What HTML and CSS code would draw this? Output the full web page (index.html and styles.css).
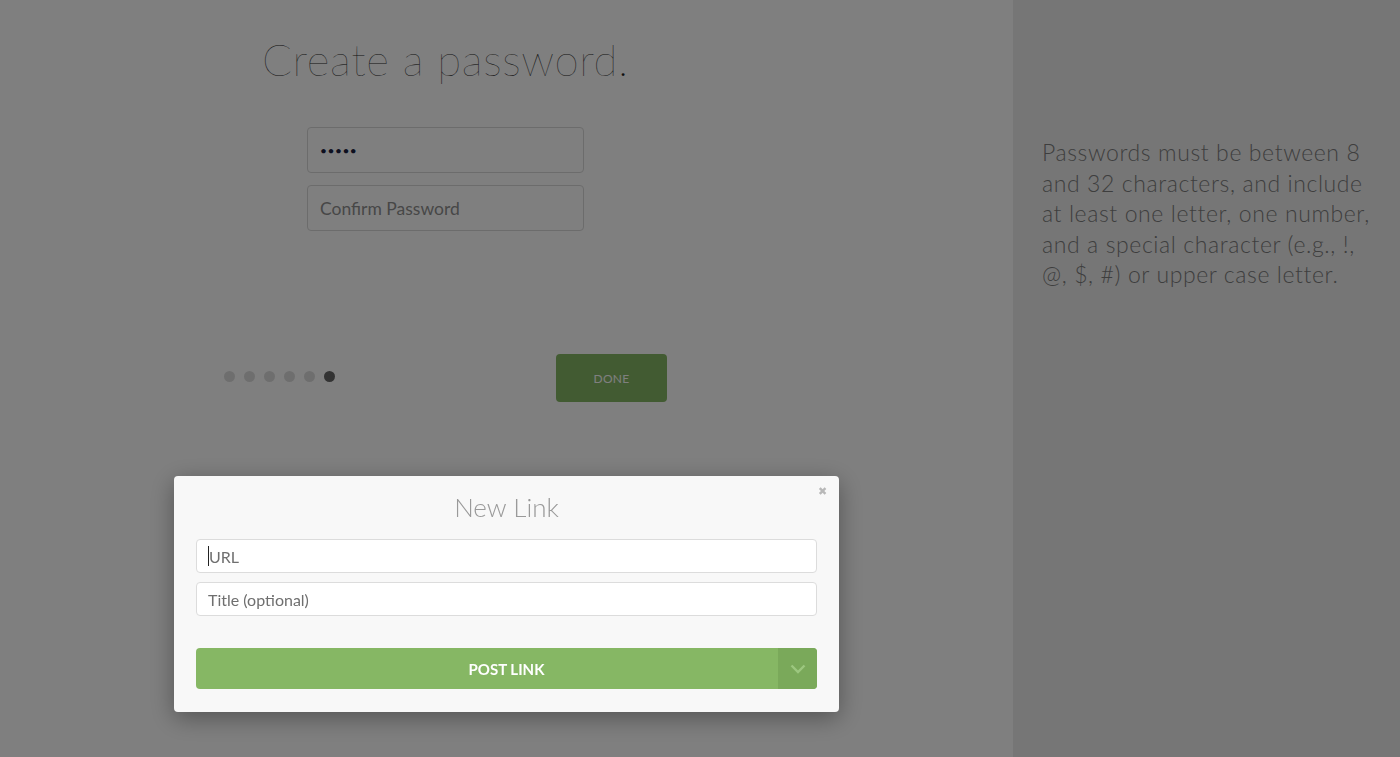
FILE: index.html
```html
<!DOCTYPE html>
<html lang="en">
<head>
<meta charset="utf-8">
<title>Create a password</title>
<link rel="stylesheet" href="styles.css">
</head>
<body>
<div class="page">
  <main class="main">
    <h1 class="heading">Create a password.</h1>
    <div class="fields">
      <div class="field field-filled">•••••</div>
      <div class="field field-empty">Confirm Password</div>
    </div>
    <div class="footer">
      <div class="dots">
        <span class="dot"></span><span class="dot"></span><span class="dot"></span><span class="dot"></span><span class="dot"></span><span class="dot dot-active"></span>
      </div>
      <button class="done">DONE</button>
    </div>
  </main>
  <aside class="side">
    <p class="hint">Passwords must be between 8 and 32 characters, and include at least one letter, one number, and a special character (e.g., !, @, $, #) or upper case letter.</p>
  </aside>
</div>
<div class="overlay"></div>
<div class="modal">
  <span class="close">✖</span>
  <h2 class="modal-title">New Link</h2>
  <div class="modal-field"><span class="caret"></span>URL</div>
  <div class="modal-field">Title (optional)</div>
  <div class="post">
    <span class="post-label">POST LINK</span>
    <span class="post-toggle">
      <svg width="16" height="10" viewBox="0 0 16 10"><path d="M1.5 1.5 L8 8 L14.5 1.5" fill="none" stroke="#9cc77f" stroke-width="2.4"/></svg>
    </span>
  </div>
</div>
</body>
</html>
```
FILE: styles.css
```css
html, body {
  margin: 0;
  padding: 0;
  height: 100%;
}
body {
  font-family: "Lato", "Open Sans", sans-serif;
  background: #ffffff;
  overflow: hidden;
}
.page {
  display: flex;
  height: 757px;
}
.main {
  width: 1013px;
  display: flex;
  flex-direction: column;
  align-items: center;
  box-sizing: border-box;
  background: #ffffff;
  padding-right: 122px;
}
.heading {
  margin: 32px 0 0 0;
  font-weight: 200;
  font-size: 44px;
  line-height: 54px;
  color: #1e1e1e;
  letter-spacing: 0.6px;
}
.fields {
  margin-top: 41px;
  display: flex;
  flex-direction: column;
  gap: 12px;
}
.field {
  width: 277px;
  height: 46px;
  box-sizing: border-box;
  border: 1px solid #d8d8d8;
  border-radius: 4px;
  padding: 0 12px;
  display: flex;
  align-items: center;
  font-size: 17.5px;
  background: #ffffff;
}
.field-filled {
  color: #1b2140;
  font-size: 12px;
  letter-spacing: 0.5px;
}
.field-empty {
  color: #8f8f8f;
}
.footer {
  margin-top: 123px;
  display: flex;
  align-items: center;
  width: 443px;
  justify-content: space-between;
}
.dots {
  display: flex;
  gap: 9px;
  margin-bottom: 4px;
}
.dot {
  width: 11px;
  height: 11px;
  border-radius: 50%;
  background: #dddddd;
}
.dot-active {
  background: #666666;
}
.done {
  width: 111px;
  height: 48px;
  border: none;
  border-radius: 4px;
  background: #85b664;
  color: #ffffff;
  font-family: "Lato", "Open Sans", sans-serif;
  font-size: 12px;
  letter-spacing: 0.3px;
}
.side {
  flex: 1;
  background: #ededed;
  padding: 137px 0 0 29px;
}
.hint {
  margin: 0;
  width: 331px;
  font-size: 23px;
  font-weight: 300;
  line-height: 30.5px;
  letter-spacing: 0.6px;
  color: #7d7d7d;
}
.overlay {
  position: fixed;
  inset: 0;
  background: rgba(0, 0, 0, 0.5);
}
.modal {
  position: fixed;
  left: 174px;
  top: 476px;
  width: 665px;
  height: 236px;
  box-sizing: border-box;
  padding: 15px 22px 0 22px;
  background: #f8f8f8;
  border-radius: 4px;
  box-shadow: 0 6px 24px rgba(0, 0, 0, 0.35);
}
.close {
  position: absolute;
  right: 12px;
  top: 8px;
  font-size: 11px;
  color: #b8b8b8;
}
.modal-title {
  margin: 0 0 16px 0;
  text-align: center;
  font-weight: 300;
  font-size: 26px;
  line-height: 32px;
  color: #9a9a9a;
}
.modal-field {
  height: 34px;
  box-sizing: border-box;
  border: 1px solid #dcdcdc;
  border-radius: 4px;
  background: #ffffff;
  padding: 0 11px;
  display: flex;
  align-items: center;
  font-size: 16px;
  color: #6f6f6f;
  margin-bottom: 9px;
}
.caret {
  width: 1px;
  height: 20px;
  background: #222;
}
.post {
  margin-top: 32px;
  height: 41px;
  display: flex;
  border-radius: 4px;
  overflow: hidden;
  background: #86b764;
}
.post-label {
  flex: 1;
  display: flex;
  align-items: center;
  justify-content: center;
  color: #ffffff;
  font-weight: 700;
  font-size: 15px;
  padding-left: 39px;
}
.post-toggle {
  width: 39px;
  background: #7aa95a;
  display: flex;
  align-items: center;
  justify-content: center;
}
```
